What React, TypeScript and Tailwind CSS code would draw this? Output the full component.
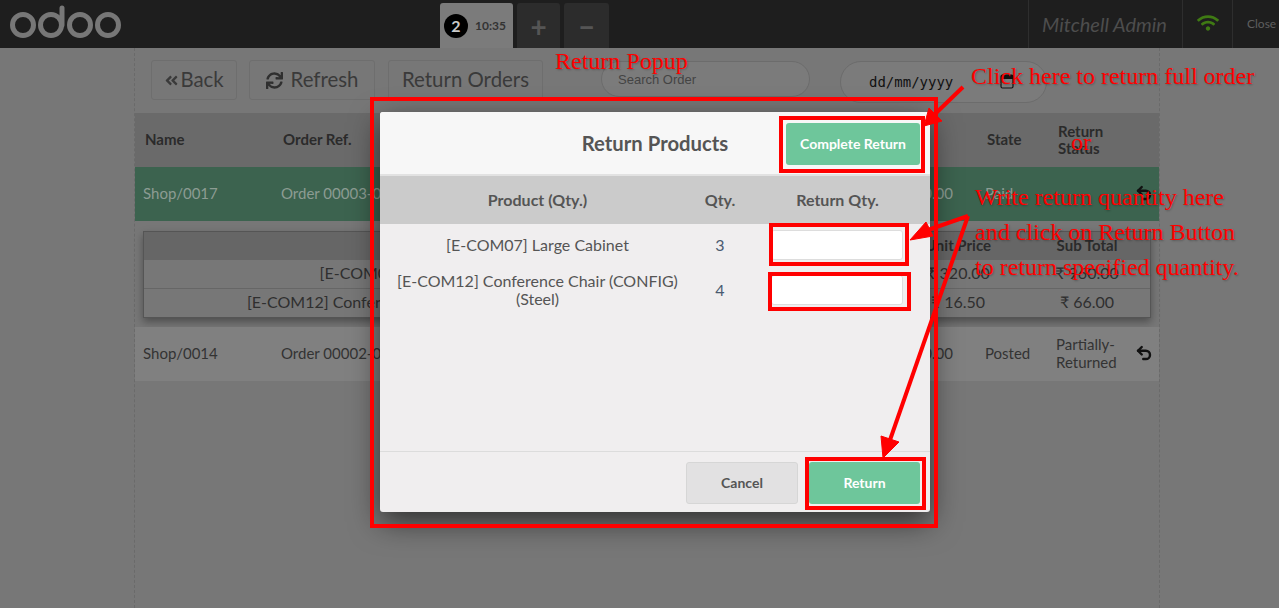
import React from "react";
import {Undo2} from "lucide-react";
import {FaAngleDoubleLeft, FaSync, FaWifi} from "react-icons/fa";

const rowGrid = "grid grid-cols-[138px_527px_177px_71px_80px_31px] items-center";
const subGrid = "grid grid-cols-[534px_216px_128px_130px] items-center";
const popupGrid = "grid grid-cols-[315px_50px_185px] items-center";

function OdooLogo() {
    return (
        <svg width="120" height="40" viewBox="0 0 120 40" className="ml-[9px] mt-[3px]">
            <g fill="none" stroke="#777" strokeWidth="5">
                <circle cx="14" cy="22" r="10.5" />
                <circle cx="42" cy="22" r="10.5" />
                <circle cx="71" cy="22" r="10.5" />
                <circle cx="99" cy="22" r="10.5" />
                <path d="M53 22V5" strokeLinecap="round" />
            </g>
        </svg>
    );
}

function Header() {
    return (
        <header className="flex h-12 shrink-0 bg-[#1e1e1e]">
            <div className="w-[440px]">
                <OdooLogo />
            </div>
            <div className="flex gap-1 pt-[3px]">
                <div className="flex w-[73px] items-center gap-[7px] rounded-t-[3px] bg-[#7b7b7b] pl-1">
                    <span className="flex h-6 w-6 items-center justify-center rounded-full bg-black text-[16px] font-bold text-[#c9c9c9]">2</span>
                    <span className="text-[12px] font-bold text-[#333]">10:35</span>
                </div>
                <div className="flex w-[43px] items-center justify-center rounded-t-[3px] bg-[#2c2c2c] text-[28px] font-bold text-[#555]">+</div>
                <div className="flex w-[45px] items-center justify-center rounded-t-[3px] bg-[#2c2c2c] text-[28px] font-bold text-[#555]">−</div>
            </div>
            <div className="ml-auto flex">
                <div className="flex w-[154px] items-center justify-center border-l border-[#2e2e2e] pr-[2px] text-[20px] italic text-[#4d4d4d]">Mitchell Admin</div>
                <div className="flex w-[50px] items-center justify-center border-l border-[#2e2e2e]">
                    <FaWifi size={22} className="mb-[3px] text-[#3f7a13]" />
                </div>
                <div className="flex w-[47px] items-center border-l border-[#2e2e2e] pb-px pl-[14px] text-[12px] text-[#5e5e5e]">Close</div>
            </div>
        </header>
    );
}

function Toolbar() {
    const btn = "flex h-10 items-center justify-center rounded-[3px] border border-[#6e6e6e] bg-[#777] pb-[2px] text-[20.4px] leading-none text-[#3a3a3a]";

    return (
        <div className="flex h-[65px] items-start pl-4 pt-3">
            <div className={`${btn} w-[86px] gap-px`}>
                <FaAngleDoubleLeft size={15} className="mt-[2px]" />
                Back
            </div>
            <div className={`${btn} ml-3 w-[126px] gap-2`}>
                <FaSync size={17} className="mt-[2px] text-[#2f2f2f]" />
                Refresh
            </div>
            <div className={`${btn} ml-[13px] w-[155px]`}>Return Orders</div>
            <div className="ml-[58px] mt-px flex h-9 w-[209px] items-center rounded-full border border-[#6c6c6c] bg-[#7b7b7b] pl-4 pt-px font-['Liberation_Sans',sans-serif] text-[13px] text-[#444]">
                Search Order
            </div>
            <div className="relative ml-[30px] mt-px flex h-[42px] w-[207px] items-center rounded-full border border-[#6c6c6c] bg-[#7b7b7b] pl-7 font-['DejaVu_Sans_Mono',monospace] text-[14px] text-[#111]">
                dd/mm/yyyy
                <svg width="14" height="15" viewBox="0 0 14 15" className="absolute left-[159px] top-[12px]">
                    <rect x="1" y="1" width="12" height="13" rx="1.5" fill="none" stroke="#111" strokeWidth="1.2" />
                    <rect x="1" y="1" width="12" height="4" fill="#111" />
                </svg>
            </div>
        </div>
    );
}

function OrderRow(props: {name: string; order: string; state: string; status: string; active?: boolean}) {
    return (
        <div className={`${rowGrid} h-[54px] pb-[3px] text-[15px] leading-[18px] ${props.active ? "bg-[#3c634f] text-[#8c9c93]" : "bg-[#808080] text-[#333]"}`}>
            <div className="pl-2">{props.name}</div>
            <div className="pl-2">{props.order}</div>
            <div className="pr-6 text-right">120.00</div>
            <div className="pl-2">{props.state}</div>
            <div className="pl-2">{props.status}</div>
            <div className="pl-[7px]">
                <Undo2 size={18} strokeWidth={3.2} className="text-[#111]" />
            </div>
        </div>
    );
}

function SubRow(props: {product: string; price: string; total: string}) {
    return (
        <div className={`${subGrid} h-[29px] border-t border-[#666] pb-[2px] text-center text-[16px] text-[#2f2f2f]`}>
            <div>{props.product}</div>
            <div />
            <div>{props.price}</div>
            <div>{props.total}</div>
        </div>
    );
}

function OrdersTable() {
    return (
        <div>
            <div className={`${rowGrid} h-[54px] bg-[#6a6a6a] pb-px text-[15px] font-bold leading-[17px] text-[#2b2b2b]`}>
                <div className="pl-[10px]">Name</div>
                <div className="pl-[10px]">Order Ref.</div>
                <div />
                <div className="pl-[10px]">State</div>
                <div className="pl-[10px]">Return Status</div>
                <div />
            </div>
            <OrderRow active name="Shop/0017" order="Order 00003-001-0001" state="Paid" status="" />
            <div className="mx-2 mb-[9px] mt-[10px] border border-[#555] shadow-[0_4px_8px_rgba(0,0,0,0.35)]">
                <div className={`${subGrid} h-[27px] bg-[#666] text-center text-[15px] font-bold text-[#2b2b2b]`}>
                    <div>Product</div>
                    <div />
                    <div>Unit Price</div>
                    <div>Sub Total</div>
                </div>
                <SubRow product="[E-COM07] Large Cabinet" price="₹ 320.00" total="₹ 960.00" />
                <SubRow product="[E-COM12] Conference Chair (CONFIG) (Steel)" price="₹ 16.50" total="₹ 66.00" />
            </div>
            <OrderRow name="Shop/0014" order="Order 00002-001-0001" state="Posted" status="Partially-Returned" />
        </div>
    );
}

function QtyRow(props: {height: string; product: string; qty: string}) {
    return (
        <div className={`${popupGrid} text-center text-[16px] leading-[18px] text-[#555] ${props.height}`}>
            <div className="px-4">{props.product}</div>
            <div className="text-[#4a5a70]">{props.qty}</div>
            <div className="flex justify-center pr-[2px]">
                <div className="h-[30px] w-[132px] rounded-[3px] border border-[#ddd] bg-white" />
            </div>
        </div>
    );
}

function ReturnPopup() {
    return (
        <div className="absolute left-[380px] top-[112px] flex h-[400px] w-[550px] flex-col rounded-[3px] bg-[#f0eeef] shadow-[0_10px_30px_rgba(0,0,0,0.6)]">
            <div className="relative flex h-16 items-center justify-center rounded-t-[3px] border-b-2 border-[#e2e2e2] bg-[#f7f7f7] text-[20.3px] font-bold text-[#555]">
                Return Products
                <div className="absolute left-[406px] top-[11px] flex h-[42px] w-[134px] items-center justify-center rounded-[3px] bg-[#6ec69b] pb-[2px] text-[14px] font-bold text-white">
                    Complete Return
                </div>
            </div>
            <div className={`${popupGrid} h-12 bg-[#cbcbcb] text-center text-[16px] font-bold text-[#555]`}>
                <div>Product (Qty.)</div>
                <div>Qty.</div>
                <div>Return Qty.</div>
            </div>
            <QtyRow height="h-[42px]" product="[E-COM07] Large Cabinet" qty="3" />
            <QtyRow height="h-[47px]" product="[E-COM12] Conference Chair (CONFIG) (Steel)" qty="4" />
            <div className="mt-auto flex h-[61px] justify-end gap-[11px] border-t border-[#dcdcdc] pr-[10px] pt-[10px]">
                <div className="flex h-[42px] w-[112px] items-center justify-center rounded-[3px] border border-[#d6d6d6] bg-[#e2e1e2] pb-[2px] text-[14px] font-bold text-[#555]">Cancel</div>
                <div className="flex h-[42px] w-[111px] items-center justify-center rounded-[3px] bg-[#6ec69b] pb-[2px] text-[14px] font-bold text-white">Return</div>
            </div>
        </div>
    );
}

function Annotations() {
    const note = "absolute whitespace-nowrap font-['Liberation_Serif',serif] text-[24px] leading-7 text-[#ff0000] [text-shadow:1px_1px_2px_rgba(0,0,0,0.25)]";

    return (
        <>
            <svg width="1279" height="608" className="absolute left-0 top-0" fill="none" stroke="#ff0000" strokeWidth="4">
                <rect x="372" y="99" width="564" height="427" />
                <rect x="781" y="118" width="142" height="53" />
                <rect x="771" y="225" width="136" height="39" />
                <rect x="770" y="274" width="139" height="35" />
                <rect x="807" y="459" width="117" height="49" />
                <path d="M963 87 L934 115" />
                <path d="M968 216 L925 231" />
                <path d="M968 216 L890 440" />
                <path d="M924 126 L929 108 L942 121 Z" fill="#ff0000" strokeWidth="1" />
                <path d="M910 240 L926 222 L933 236 Z" fill="#ff0000" strokeWidth="1" />
                <path d="M883 458 L881 436 L899 442 Z" fill="#ff0000" strokeWidth="1" />
            </svg>
            <div className={`${note} left-[555px] top-[47px]`}>Return Popup</div>
            <div className={`${note} left-[971px] top-[62px]`}>Click here to return full order</div>
            <div className={`${note} left-[1071px] top-[128px]`}>or</div>
            <div className={`${note} left-[975px] top-[183px]`}>Write return quantity here</div>
            <div className={`${note} left-[975px] top-[218px]`}>and click on Return Button</div>
            <div className={`${note} left-[975px] top-[253px]`}>to return specified quantity.</div>
        </>
    );
}

export default function App() {
    return (
        <div className="relative flex h-[608px] w-[1279px] flex-col overflow-hidden bg-[#777] font-['Lato',sans-serif]">
            <Header />
            <div className="ml-[134px] flex w-[1026px] flex-1 flex-col border-x border-dashed border-[#6a6a6a]">
                <Toolbar />
                <OrdersTable />
            </div>
            <ReturnPopup />
            <Annotations />
        </div>
    );
}
